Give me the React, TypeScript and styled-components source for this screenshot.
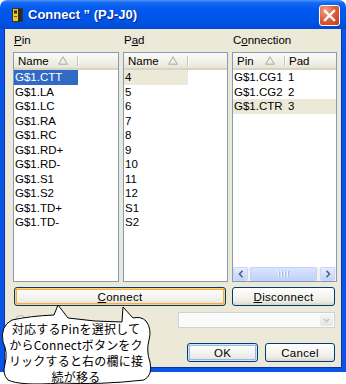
import styled, { createGlobalStyle } from "styled-components";

const GlobalStyle = createGlobalStyle`
  html, body {
    margin: 0;
    padding: 0;
    background: #ffffff;
  }
  body {
    font-family: "Liberation Sans", Arial, sans-serif;
    font-size: 11.5px;
    color: #000;
  }
  * {
    box-sizing: border-box;
  }
`;

const Page = styled.div`
  position: relative;
  width: 346px;
  height: 384px;
  overflow: hidden;
`;

const Window = styled.div`
  width: 346px;
  height: 372px;
  display: flex;
  flex-direction: column;
`;

const TitleBar = styled.div`
  height: 29px;
  flex: none;
  display: flex;
  align-items: center;
  padding: 0 6px 0 12px;
  border-radius: 7px 7px 0 0;
  background: linear-gradient(
    to bottom,
    #4a94fa 0%,
    #1467f3 10%,
    #0058ee 35%,
    #0054e5 75%,
    #0049d2 100%
  );
`;

const TitleText = styled.div`
  margin-left: 5px;
  color: #fff;
  font-weight: bold;
  font-size: 13px;
  text-shadow: 1px 1px 0 #0a1f8a;
  flex: 1;
`;

const CloseBtn = styled.div`
  width: 21px;
  height: 21px;
  margin-top: 2px;
  border: 1px solid #fff;
  border-radius: 3px;
  background: radial-gradient(circle at 30% 25%, #f0a58a 0%, #e0613c 45%, #c3391a 100%);
  display: flex;
  align-items: center;
  justify-content: center;
`;

const Body = styled.div`
  flex: 1;
  background: #ece9d8;
  border: 4px solid #0b55e6;
  border-top: none;
  box-shadow: inset 1px 0 0 #0831b8, inset -1px 0 0 #0831b8, inset 0 -1px 0 #0831b8;
  padding: 4px 5px 0 9px;
  display: flex;
  flex-direction: column;
`;

const Columns = styled.div`
  display: grid;
  grid-template-columns: 106px 105px 105px;
  column-gap: 4px;
`;

const Column = styled.div`
  display: flex;
  flex-direction: column;
`;

const Label = styled.div`
  height: 19px;
  line-height: 15px;
  padding-left: 1px;
`;

const ListBox = styled.div`
  height: 230px;
  border: 1px solid #7f9db9;
  background: #fff;
  display: flex;
  flex-direction: column;
  overflow: hidden;
`;

const Header = styled.div`
  height: 17px;
  flex: none;
  display: flex;
  align-items: stretch;
  background: linear-gradient(to bottom, #fbfaf6, #efeee4 70%, #e6e4d5);
  border-bottom: 2px solid #d8d4c4;
`;

const HeaderCell = styled.div<{ $w?: number }>`
  width: ${(p) => (p.$w ? `${p.$w}px` : "auto")};
  flex: ${(p) => (p.$w ? "none" : "1")};
  display: flex;
  align-items: center;
  padding-left: 4px;
  white-space: nowrap;
`;

const SortMark = styled.svg`
  margin-left: auto;
  margin-right: 9px;
`;

const Divider = styled.div`
  width: 1px;
  margin: 3px 0 2px;
  background: #c7c5b2;
  box-shadow: 1px 0 0 #ffffff;
`;

const Rows = styled.div`
  flex: 1;
  display: flex;
  flex-direction: column;
`;

const Row = styled.div<{ $hl?: boolean }>`
  height: 14.5px;
  line-height: 14.5px;
  display: flex;
  white-space: nowrap;
  background: ${(p) => (p.$hl ? "#ece9d8" : "transparent")};
`;

const Cell = styled.div<{ $w?: number; $sel?: "focus" | "dim" }>`
  width: ${(p) => (p.$w ? `${p.$w}px` : "auto")};
  flex: ${(p) => (p.$w ? "none" : "1")};
  padding-left: 1px;
  background: ${(p) =>
    p.$sel === "focus" ? "#316ac5" : p.$sel === "dim" ? "#ece9d8" : "transparent"};
  color: ${(p) => (p.$sel === "focus" ? "#fff" : "#000")};
`;

const HScroll = styled.div`
  height: 14px;
  flex: none;
  display: flex;
  background: #f3f2ec;
  padding: 0 1px 0 0;
`;

const ScrollBtn = styled.div`
  width: 15px;
  height: 14px;
  border-radius: 2px;
  border: 1px solid #c9d7fa;
  background: linear-gradient(to bottom, #e4ecfe, #c3d4fc);
  display: flex;
  align-items: center;
  justify-content: center;
`;

const Thumb = styled.div`
  flex: 1;
  margin: 0 3px 0 2px;
  border-radius: 2px;
  border: 1px solid #c2d2f8;
  background: linear-gradient(to bottom, #d9e4fe, #c0d1fb);
  display: flex;
  align-items: center;
  justify-content: center;
  gap: 1px;
`;

const Grip = styled.div`
  width: 1px;
  height: 6px;
  background: #eef3ff;
  box-shadow: 1px 0 0 #a9bde9;
  margin-right: 1px;
`;

const ButtonRow = styled.div`
  display: grid;
  grid-template-columns: 106px 105px 105px;
  column-gap: 4px;
  margin-top: 5px;
  height: 19px;
`;

const Button = styled.div<{ $ring?: "orange" | "blue"; $span?: boolean }>`
  grid-column: ${(p) => (p.$span ? "1 / 3" : "auto")};
  margin: ${(p) => (p.$span ? "0 2px 0 1px" : "0 2px 0 0")};
  height: 19px;
  border: 1px solid #003c74;
  border-radius: 3px;
  background: linear-gradient(to bottom, #ffffff 0%, #f6f5f1 45%, #ecebe5 80%, #d8d3c8 100%);
  box-shadow: ${(p) =>
    p.$ring === "orange"
      ? "inset 0 0 0 1px #fcd37c, inset 0 0 0 2px #f3ae3d"
      : p.$ring === "blue"
      ? "inset 0 0 0 1px #cee7ff, inset 0 0 0 2px #98b8ea"
      : "none"};
  display: flex;
  align-items: center;
  justify-content: center;
  font-size: 11.5px;
  letter-spacing: 0.3px;
`;

const OptionRow = styled.div`
  margin-top: 6px;
  height: 16px;
  display: flex;
  align-items: center;
`;

const Radio = styled.div`
  width: 11px;
  height: 11px;
  margin-left: 2px;
  border-radius: 50%;
  border: 1px solid #b5b2a4;
  background: #f4f3ee;
`;

const Combo = styled.div`
  width: 157px;
  height: 16px;
  margin-left: auto;
  margin-right: 2px;
  border: 1px solid #c9d2df;
  background: #fbfbf9;
  display: flex;
  justify-content: flex-end;
  padding: 1px;
`;

const ComboBtn = styled.div`
  width: 13px;
  border-radius: 2px;
  background: linear-gradient(to bottom, #f4f4f2, #e6e6e0);
  display: flex;
  align-items: center;
  justify-content: center;
`;

const FooterRow = styled.div`
  margin-top: 15px;
  height: 19px;
  display: flex;
  justify-content: flex-end;
  gap: 7px;
  padding-right: 2px;
`;

const FooterButton = styled(Button)<{ $w: number }>`
  width: ${(p) => p.$w}px;
  margin: 0;
`;

const Callout = styled.div`
  position: absolute;
  left: 0;
  top: 300px;
  width: 156px;
  height: 84px;
`;

const CalloutShape = styled.svg`
  position: absolute;
  left: 0;
  top: 0;
`;

const CalloutText = styled.div`
  position: absolute;
  left: 4px;
  top: 21px;
  width: 144px;
  text-align: center;
  font-family: "Noto Sans CJK JP", "Liberation Sans", sans-serif;
  font-size: 12px;
  line-height: 16px;
  letter-spacing: 0.2px;
  color: #000;
`;

const pins = ["G$1.CTT", "G$1.LA", "G$1.LC", "G$1.RA", "G$1.RC", "G$1.RD+", "G$1.RD-", "G$1.S1", "G$1.S2", "G$1.TD+", "G$1.TD-"];
const pads = ["4", "5", "6", "7", "8", "9", "10", "11", "12", "S1", "S2"];
const connections = [
  { pin: "G$1.CG1", pad: "1" },
  { pin: "G$1.CG2", pad: "2" },
  { pin: "G$1.CTR", pad: "3" },
];

function SortArrow() {
  return (
    <SortMark width="10" height="9" viewBox="0 0 10 9">
      <path d="M5 0.8 L9.3 8.2 L0.7 8.2 Z" fill="none" stroke="#aca899" strokeWidth="1" />
    </SortMark>
  );
}

function App() {
  return (
    <Page>
      <GlobalStyle />
      <Window>
        <TitleBar>
          <svg width="11" height="14" viewBox="0 0 11 14">
            <rect x="0.5" y="0.5" width="10" height="13" fill="#e9c92c" stroke="#3a3520" />
            <rect x="6" y="1" width="4" height="12" fill="#2c2a22" />
            <rect x="2" y="2.5" width="3" height="3" fill="#2c2a22" />
            <rect x="2" y="8" width="3" height="1" fill="#6a5a10" />
          </svg>
          <TitleText>Connect ” (PJ-J0)</TitleText>
          <CloseBtn>
            <svg width="13" height="13" viewBox="0 0 13 13">
              <path d="M2 2 L11 11 M11 2 L2 11" stroke="#fff" strokeWidth="2.4" strokeLinecap="square" />
            </svg>
          </CloseBtn>
        </TitleBar>
        <Body>
          <Columns>
            <Column>
              <Label>
                <u>P</u>in
              </Label>
              <ListBox>
                <Header>
                  <HeaderCell $w={63}>
                    Name
                    <SortArrow />
                  </HeaderCell>
                  <Divider />
                </Header>
                <Rows>
                  {pins.map((p, i) => (
                    <Row key={p}>
                      <Cell $w={64} $sel={i === 0 ? "focus" : undefined}>
                        {p}
                      </Cell>
                    </Row>
                  ))}
                </Rows>
              </ListBox>
            </Column>
            <Column>
              <Label>
                P<u>a</u>d
              </Label>
              <ListBox>
                <Header>
                  <HeaderCell $w={63}>
                    Name
                    <SortArrow />
                  </HeaderCell>
                  <Divider />
                </Header>
                <Rows>
                  {pads.map((p, i) => (
                    <Row key={p}>
                      <Cell $w={64} $sel={i === 0 ? "dim" : undefined}>
                        {p}
                      </Cell>
                    </Row>
                  ))}
                </Rows>
              </ListBox>
            </Column>
            <Column>
              <Label>
                C<u>o</u>nnection
              </Label>
              <ListBox>
                <Header>
                  <HeaderCell $w={51}>
                    Pin
                    <SortArrow />
                  </HeaderCell>
                  <Divider />
                  <HeaderCell>Pad</HeaderCell>
                </Header>
                <Rows>
                  {connections.map((c, i) => (
                    <Row key={c.pin} $hl={i === 2}>
                      <Cell $w={54}>{c.pin}</Cell>
                      <Cell>{c.pad}</Cell>
                    </Row>
                  ))}
                </Rows>
                <HScroll>
                  <ScrollBtn>
                    <svg width="6" height="8" viewBox="0 0 6 8">
                      <path d="M4.5 0.8 L1.5 4 L4.5 7.2" fill="none" stroke="#4d6185" strokeWidth="1.6" />
                    </svg>
                  </ScrollBtn>
                  <Thumb>
                    <Grip />
                    <Grip />
                    <Grip />
                    <Grip />
                  </Thumb>
                  <ScrollBtn>
                    <svg width="6" height="8" viewBox="0 0 6 8">
                      <path d="M1.5 0.8 L4.5 4 L1.5 7.2" fill="none" stroke="#4d6185" strokeWidth="1.6" />
                    </svg>
                  </ScrollBtn>
                </HScroll>
              </ListBox>
            </Column>
          </Columns>
          <ButtonRow>
            <Button $span $ring="orange">
              <u>C</u>onnect
            </Button>
            <Button>
              <u>D</u>isconnect
            </Button>
          </ButtonRow>
          <OptionRow>
            <Radio />
            <Combo>
              <ComboBtn>
                <svg width="7" height="5" viewBox="0 0 7 5">
                  <path d="M0.8 0.8 L3.5 3.8 L6.2 0.8" fill="none" stroke="#c3c7cf" strokeWidth="1.4" />
                </svg>
              </ComboBtn>
            </Combo>
          </OptionRow>
          <FooterRow>
            <FooterButton $w={71} $ring="blue">
              OK
            </FooterButton>
            <FooterButton $w={70}>Cancel</FooterButton>
          </FooterRow>
        </Body>
      </Window>
      <Callout>
        <CalloutShape width="156" height="84" viewBox="0 0 156 84">
          <path
            d="M12 20 Q30 16 54 15 L58 5 L68 18 Q95 22 122 22 L123 7 L133 18 Q141 16 146 21 Q152 29 149 40 Q146 51 150 62 Q153 75 144 80 Q100 85 60 83 Q20 86 8 80 Q2 74 5 64 Q8 52 3 42 Q0 26 12 20 Z"
            fill="#fff"
            stroke="#000"
            strokeWidth="1"
          />
        </CalloutShape>
        <CalloutText>
          対応するPinを選択して
          <br />
          からConnectボタンをク
          <br />
          リックすると右の欄に接
          <br />
          続が移る
        </CalloutText>
      </Callout>
    </Page>
  );
}

export default App;
